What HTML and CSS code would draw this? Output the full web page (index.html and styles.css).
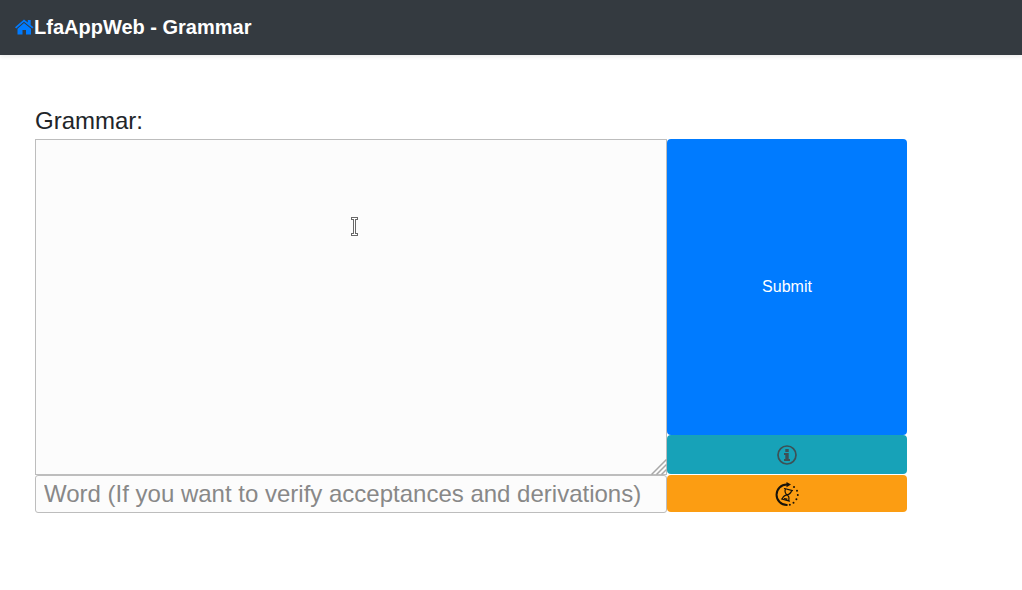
FILE: index.html
```html
<!DOCTYPE html>
<html lang="en">
<head>
<meta charset="utf-8">
<meta name="viewport" content="width=device-width, initial-scale=1">
<title>LfaAppWeb - Grammar</title>
<link rel="stylesheet" href="styles.css">
</head>
<body>
<header class="navbar">
  <a class="home-link" href="#" aria-label="Home">
    <svg class="home-icon" viewBox="0 0 19 16" aria-hidden="true">
      <path d="M9 0.500 12.800 3.600V1H15.700V6L18.500 8.300 17.300 9.600 9 2.700 1.200 9.600 0 8.300Z"/>
      <path d="M9 4 16 9.700V15.500H11V11H7.500V15.500H2.500V9.700Z"/>
    </svg>
  </a>
  <h1 class="brand">LfaAppWeb - Grammar</h1>
</header>
<main class="content">
  <form class="grammar-form">
    <label class="form-label" for="grammar">Grammar:</label>
    <div class="grammar-row">
      <div class="editor">
        <textarea class="field grammar-input" id="grammar"></textarea>
        <svg class="grip" viewBox="0 0 16 16" aria-hidden="true"><path d="M0.500 15.500 15.500 0.500M5.500 15.500 15.500 5.500M10.500 15.500 15.500 10.500"/></svg>
        <svg class="text-cursor" viewBox="0 0 9 21" aria-hidden="true">
          <path class="cursor-edge" d="M1 2.500H8M4.500 2V19M1 18.500H8"/>
          <path class="cursor-core" d="M2 2.500H7M4.500 2V19M2 18.500H7"/>
        </svg>
      </div>
      <div class="actions">
        <button class="btn btn-submit" type="submit">Submit</button>
        <button class="btn btn-info" type="button" aria-label="Information">
          <svg class="info-icon" viewBox="0 0 20 20" aria-hidden="true">
            <circle cx="10" cy="10" r="9"/>
            <path d="M8.300 4H11.700V7H8.300ZM7 8H11.700V14H13V16H7V14H8.300V10H7Z"/>
          </svg>
        </button>
      </div>
    </div>
    <div class="word-row">
      <input class="field word-input" type="text" aria-label="Word" placeholder="Word (If you want to verify acceptances and derivations)">
      <button class="btn btn-history" type="button" aria-label="Derivation history">
        <svg class="history-icon" viewBox="0 0 24 24" aria-hidden="true">
          <path class="arc" d="M11.800 23A10.250 10.250 0 0 1 11.800 2.500H12.500"/>
          <path class="arrow" d="M11.500 0 16 2.600 11.500 5.200Z"/>
          <path class="dots" d="M19 5h.01M22 8.700h.01M22.800 13h.01M21.400 17.300h.01M18.500 20.800h.01M14.800 22.700h.01"/>
          <path class="glass" d="M9.500 6.500 17.500 8.600M6.500 17 14.500 19.100M10.300 7C9.500 10.300 10 11.500 12 12.800 9.200 13.200 8 14.300 7.300 17M16.700 8.500C15.800 11.500 14.800 12.300 12 12.800 13.900 14 14.500 15.500 13.700 18.500M9.500 16.500 12 17.200"/>
        </svg>
      </button>
    </div>
  </form>
</main>
</body>
</html>
```
FILE: styles.css
```css
* {
  box-sizing: border-box;
}

body {
  margin: 0;
  background: #fff;
  color: #212529;
  font-family: "Liberation Sans", Arial, sans-serif;
  font-size: 16px;
}

.navbar {
  display: flex;
  align-items: center;
  padding: 12px 15px 13px;
  background: #343a40;
  box-shadow: 0 2px 4px rgba(0, 0, 0, 0.08);
}

.home-link {
  display: flex;
  color: #007bff;
}

.home-icon {
  width: 19px;
  height: 16px;
  fill: currentColor;
}

.brand {
  margin: 0;
  color: #fff;
  font-size: 20px;
  line-height: 30px;
}

.content {
  padding: 48px 115px 48px 35px;
}

.grammar-form {
  display: flex;
  flex-direction: column;
}

.form-label {
  font-size: 24px;
  line-height: 36px;
}

.grammar-row,
.word-row {
  display: grid;
  grid-template-columns: 1fr 240px;
}

.editor {
  position: relative;
  display: flex;
}

.field {
  width: 100%;
  min-width: 0;
  margin: 0;
  border: 1px solid #bdbdbd;
  background: #fcfcfc;
  color: #212529;
  font-family: inherit;
  font-size: 24px;
  outline: 0;
}

.grammar-input {
  height: 336px;
  padding: 4px 8px;
  resize: none;
}

.word-input {
  height: 38px;
  padding: 0 8px;
  border-radius: 3px;
}

.word-input::placeholder {
  color: #888;
  opacity: 1;
}

.grip {
  position: absolute;
  right: 0;
  bottom: 0;
  width: 16px;
  height: 16px;
  fill: none;
  stroke: #a8a8a8;
  stroke-width: 1.5;
  pointer-events: none;
}

.text-cursor {
  position: absolute;
  left: 315px;
  top: 77px;
  width: 9px;
  height: 21px;
  fill: none;
  pointer-events: none;
}

.cursor-edge {
  stroke: #686868;
  stroke-width: 3;
}

.cursor-core {
  stroke: #fff;
  stroke-width: 1;
}

.actions {
  display: flex;
  flex-direction: column;
  padding-bottom: 1px;
}

.btn {
  display: flex;
  align-items: center;
  justify-content: center;
  margin: 0;
  padding: 0;
  border: 0;
  border-radius: 4px;
  font-family: inherit;
  font-size: 16px;
  cursor: pointer;
}

.btn-submit {
  flex: 1;
  background: #007bff;
  color: #fff;
}

.btn-info {
  height: 39px;
  background: #17a2b8;
  color: #3d5055;
}

.info-icon {
  width: 20px;
  height: 20px;
  fill: currentColor;
}

.info-icon circle {
  fill: none;
  stroke: currentColor;
  stroke-width: 1.7;
}

.btn-history {
  height: 37px;
  background: #fc9d12;
  color: #17130b;
}

.history-icon {
  width: 24px;
  height: 24px;
  fill: none;
  stroke: currentColor;
  stroke-linecap: round;
}

.arc {
  stroke-width: 2;
}

.arrow {
  fill: currentColor;
  stroke: none;
}

.dots {
  stroke-width: 2;
}

.glass {
  stroke-width: 1.2;
}
```
